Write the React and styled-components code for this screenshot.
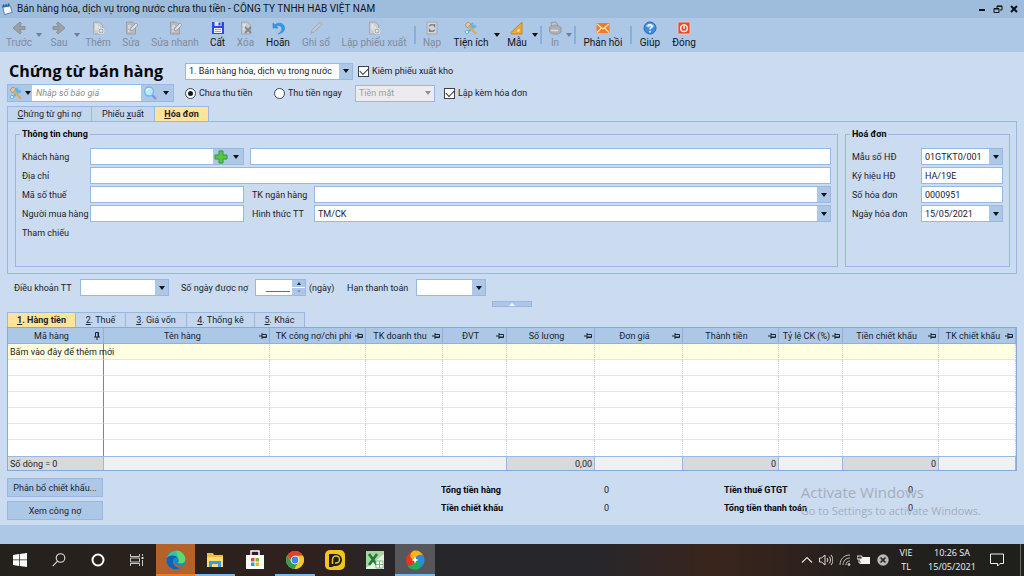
import { useState } from "react";
import styled, { createGlobalStyle } from "styled-components";

const tools = [
    { label: "Trước", icon: "back", w: 34, drop: true, off: true },
    { label: "Sau", icon: "next", w: 30, drop: true, off: true },
    { label: "Thêm", icon: "add", w: 32, off: true },
    { label: "Sửa", icon: "edit", w: 30, off: true },
    { label: "Sửa nhanh", icon: "edit", w: 54, off: true },
    { label: "Cất", icon: "save", w: 27 },
    { label: "Xóa", icon: "remove", w: 25, off: true },
    { label: "Hoãn", icon: "undo", w: 36 },
    { label: "Ghi sổ", icon: "pen", w: 36, off: true },
    { label: "Lập phiếu xuất", icon: "add", w: 76, off: true },
    { sep: true },
    { label: "Nạp", icon: "reload", w: 28, off: true },
    { label: "Tiện ích", icon: "tools", w: 46, drop: true },
    { label: "Mẫu", icon: "ruler", w: 30, drop: true },
    { sep: true },
    { label: "In", icon: "print", w: 22, drop: true, off: true },
    { sep: true },
    { label: "Phản hồi", icon: "mail", w: 50 },
    { sep: true },
    { label: "Giúp", icon: "help", w: 32 },
    { label: "Đóng", icon: "power", w: 32 }
];

const columns = [
    { name: "Mã hàng", w: 96, pinned: true },
    { name: "Tên hàng" },
    { name: "TK công nợ/chi phí", w: 96 },
    { name: "TK doanh thu", w: 77 },
    { name: "ĐVT", w: 64 },
    { name: "Số lượng", w: 88 },
    { name: "Đơn giá", w: 88 },
    { name: "Thành tiền", w: 96 },
    { name: "Tỷ lệ CK (%)", w: 64 },
    { name: "Tiền chiết khấu", w: 96 },
    { name: "TK chiết khấu", w: 77 }
];

const docTabs = [
    { pre: "", key: "C", rest: "hứng từ ghi nợ", w: 85 },
    { pre: "Phiếu ", key: "x", rest: "uất", w: 63 },
    { pre: "", key: "H", rest: "óa đơn", w: 54 }
];

const lineTabs = [
    { pre: "", key: "1", rest: ". Hàng tiền", w: 69 },
    { pre: "", key: "2", rest: ". Thuế", w: 50 },
    { pre: "", key: "3", rest: ". Giá vốn", w: 61 },
    { pre: "", key: "4", rest: ". Thống kê", w: 68 },
    { pre: "", key: "5", rest: ". Khác", w: 50 }
];

const page = "M2.5 1h6l3 3v9h-9z";

const icons = {
    back: <path d="M13 5.5H7.500L9.500 2.500 8 1 1 7l7 6 1.500-1.500-2-3H13z" fill="#9c9fa3" stroke="#83888e" strokeWidth=".8" />,
    next: <path d="M1 5.500h5.500L4.500 2.500 6 1l7 6-7 6-1.500-1.500 2-3H1z" fill="#9c9fa3" stroke="#83888e" strokeWidth=".8" />,
    add: <>
        <path d={page} fill="#c9cdd1" stroke="#a3a8ad" />
        <path d="M4 4h3M4 6h5M4 8h3" stroke="#f1f1f1" />
        <circle cx="10" cy="10" r="3" fill="#a5a9ad" stroke="#dfe3e7" />
        <path d="M8.500 10h3M10 8.500v3" stroke="#f4f4f4" />
    </>,
    edit: <>
        <path d={page} fill="#b7bbc0" stroke="#9a9fa5" />
        <path d="M4 5h3M4 7h2M4 10h3" stroke="#f1f1f1" />
        <path d="M6 10l1-3 5-5 2 2-5 5z" fill="#dde0e2" stroke="#90959a" strokeWidth=".8" />
    </>,
    save: <>
        <path d="M1 1h12v12H1z" fill="#2d49e0" />
        <path d="M3.500 1h7v4h-7z" fill="#dce6ff" />
        <path d="M7.500 1.500h2v3h-2z" fill="#2d49e0" />
        <path d="M3 7h8v5H3z" fill="#eef3ff" />
        <path d="M4 8.500h6M4 10.500h6" stroke="#8fa5ee" />
    </>,
    remove: <>
        <path d={page} fill="#c9cdd1" stroke="#a3a8ad" />
        <path d="M4 4h3M4 6h2M4 8h2" stroke="#f1f1f1" />
        <path d="M6 6l6 6M12 6l-6 6" stroke="#85898d" strokeWidth="2" />
    </>,
    undo: <path d="M2 2v5h5L5.200 5.200C8 3.500 11 5 11 8c0 2-1.500 3.500-4 5 4.500-1 6.500-3 6.500-6C13.500 2.500 8 .500 4 3.700z" fill="#3199e8" stroke="#2184d2" strokeWidth=".6" />,
    pen: <path d="M2 12.500l1-3.500 8-8 2.200 2-8 8z" fill="#c6c9cc" stroke="#9c9fa3" strokeWidth=".8" />,
    reload: <>
        <path d="M2 1h10v12H2z" fill="#d0d4d8" stroke="#a3a8ad" />
        <path d="M4.500 5.500c0-2 3.500-2.500 5-.5V3M9.500 8.500c0 2-3.500 2.500-5 .5v2" fill="none" stroke="#747a80" strokeWidth="1.300" />
    </>,
    tools: <>
        <path d="M3 12L11 4" stroke="#5cb7e6" strokeWidth="2" />
        <path d="M9.500 1.500a3 3 0 1 0 3 3l-2 .5-1.500-1.500z" fill="#5cb7e6" />
        <path d="M5 5.500l7 7" stroke="#e8a64c" strokeWidth="2.200" />
        <path d="M1 4l3-3 3 2-3.500 4z" fill="#e5c896" stroke="#9d8d75" strokeWidth=".8" />
        <circle cx="3" cy="11" r="1.700" fill="#d9eefb" stroke="#5cb7e6" />
    </>,
    ruler: <>
        <path d="M1 11.500L12 1v12H1z" fill="#e9a73c" stroke="#c8862a" />
        <path d="M6.500 10.500L9.500 7.500v3z" fill="#fff0cf" />
    </>,
    print: <>
        <path d="M3 1.500l5-.5 2 4-6 1z" fill="#c4c7ca" stroke="#96999c" />
        <path d="M1.500 6c3-3 11-2 11.500 1v4c-2 3-9 3-11.500 0z" fill="#acb0b4" stroke="#96999c" />
        <path d="M3 9.500h7" stroke="#dadcde" strokeWidth="1.500" />
    </>,
    mail: <>
        <path d="M.500 2h13v10H.500z" fill="#f47b20" />
        <path d="M1 3l6 5 6-5M1 11.500l4.500-4.500M13 11.500L8.500 7" fill="none" stroke="#ffe0c2" strokeWidth="1.200" />
    </>,
    help: <>
        <circle cx="7" cy="7" r="6" fill="#3d8be6" stroke="#2568ba" />
        <path d="M2.500 5.500c1-4 8-4 9 0-3 1.500-6 1.500-9 0z" fill="#86bbf4" />
        <path d="M5 5.500c0-2.500 4-2.500 4 0 0 1.300-2 1.500-2 3" fill="none" stroke="#fff" strokeWidth="1.500" />
        <circle cx="7" cy="10.700" r=".9" fill="#fff" />
    </>,
    power: <>
        <rect x="1" y="1" width="12" height="12" rx="1" fill="#e2492d" stroke="#f6c0b4" />
        <circle cx="7" cy="7.200" r="3.300" fill="none" stroke="#fff" strokeWidth="1.300" />
        <path d="M7 4.500v3.500" stroke="#fff" strokeWidth="1.400" />
    </>,
    find: <>
        <path d="M9 9l4 4" stroke="#7f95d6" strokeWidth="2.400" />
        <circle cx="6" cy="5.500" r="4.500" fill="#bfe5fa" stroke="#6fb9e6" strokeWidth="1.300" />
        <path d="M3.500 5c.500-2 2-2.500 3-2.500" fill="none" stroke="#fff" strokeWidth="1.200" />
    </>,
    plus: <path d="M5 1h4v4h4v4H9v4H5V9H1V5h4z" fill="#55c84a" stroke="#2f9a33" />,
    app: <>
        <path d="M2 4l9-1 2 8-9 2.500z" fill="#f4faff" stroke="#3b78c6" />
        <path d="M1 3l9-1.500.5 2.500L1.500 5.500z" fill="#3d7bd0" />
        <path d="M3 1.500v3M6 1v3M9 .5v3" stroke="#24477c" />
        <path d="M10 2l3 1-.5 2z" fill="#f2b632" />
    </>
};

const Icon = ({ name, size = 14 }) => (
    <svg width={size} height={size} viewBox="0 0 14 14" aria-hidden="true">{icons[name]}</svg>
);

const Caret = ({ color = "#111" }) => (
    <svg width="6" height="4" viewBox="0 0 6 4" aria-hidden="true"><path d="M0 0h6L3 4z" fill={color} /></svg>
);

const Pin = ({ down }) => (
    <svg width="8" height="8" viewBox="0 0 8 8" aria-hidden="true">
        <g transform={down ? "rotate(-90 4 4)" : undefined} fill="none" stroke="#1d2633">
            <path d="M0 4h3M3 1v6M3 2.500h4.500v3H3M3 5h4.500" />
        </g>
    </svg>
);

function Combo({ id, value, label, disabled }) {
    return (
        <ComboBox $off={disabled}>
            <select id={id} aria-label={label} disabled={disabled} defaultValue={value}>
                <option value={value}>{value}</option>
            </select>
            <ComboArrow $off={disabled}><Caret color={disabled ? "#8b8f94" : "#111"} /></ComboArrow>
        </ComboBox>
    )
}

function Tabs({ items, active, onPick, label }) {
    return (
        <TabList role="tablist" aria-label={label}>
            {items.map((tab, i) => (
                <Tab key={tab.rest} role="tab" aria-selected={i === active} $w={tab.w} $on={i === active} onClick={() => onPick(i)}>
                    {tab.pre}<u>{tab.key}</u>{tab.rest}
                </Tab>
            ))}
        </TabList>
    )
}

function Toolbar() {
    return (
        <ToolbarBox>
            {tools.map((tool, i) => tool.sep ? <Separator key={i} /> : (
                <ToolGroup key={i}>
                    <Tool $w={tool.w} disabled={tool.off}>
                        <Icon name={tool.icon} />
                        <span>{tool.label}</span>
                    </Tool>
                    {tool.drop && (
                        <ToolDrop aria-label={`Mở ${tool.label}`} disabled={tool.off}>
                            <Caret color={tool.off ? "#6f7f94" : "#111"} />
                        </ToolDrop>
                    )}
                </ToolGroup>
            ))}
        </ToolbarBox>
    )
}

function InvoicePane() {
    return (
        <Pane>
            <Group>
                <legend>Thông tin chung</legend>
                <GeneralGrid>
                    <label htmlFor="customer">Khách hàng</label>
                    <CustomerBox>
                        <input id="customer" />
                        <button aria-label="Thêm khách hàng"><Icon name="plus" /></button>
                        <button aria-label="Chọn khách hàng"><Caret /></button>
                    </CustomerBox>
                    <TextInput aria-label="Tên khách hàng" />
                    <label htmlFor="address">Địa chỉ</label>
                    <TextInput id="address" $wide />
                    <label htmlFor="taxcode">Mã số thuế</label>
                    <TextInput id="taxcode" />
                    <Pair>
                        <label htmlFor="bank">TK ngân hàng</label>
                        <Combo id="bank" value="" />
                    </Pair>
                    <label htmlFor="buyer">Người mua hàng</label>
                    <TextInput id="buyer" />
                    <Pair>
                        <label htmlFor="payment">Hình thức TT</label>
                        <Combo id="payment" value="TM/CK" />
                    </Pair>
                    <span>Tham chiếu</span>
                </GeneralGrid>
            </Group>
            <Group $narrow>
                <legend>Hoá đơn</legend>
                <InvoiceGrid>
                    <label htmlFor="form">Mẫu số HĐ</label>
                    <Combo id="form" value="01GTKT0/001" />
                    <label htmlFor="serial">Ký hiệu HĐ</label>
                    <TextInput id="serial" defaultValue="HA/19E" />
                    <label htmlFor="number">Số hóa đơn</label>
                    <TextInput id="number" defaultValue="0000951" />
                    <label htmlFor="date">Ngày hóa đơn</label>
                    <Combo id="date" value="15/05/2021" />
                </InvoiceGrid>
            </Group>
        </Pane>
    )
}

function LineTable() {
    return (
        <Table>
            <colgroup>
                {columns.map(col => <Col key={col.name} $w={col.w} />)}
            </colgroup>
            <thead>
                <tr>
                    {columns.map(col => (
                        <th key={col.name}>
                            <HeadCell><span>{col.name}</span><Pin down={col.pinned} /></HeadCell>
                        </th>
                    ))}
                </tr>
            </thead>
            <tbody>
                <NewRow>
                    <td>Bấm vào đây để thêm mới</td>
                    {columns.slice(1).map(col => <td key={col.name} />)}
                </NewRow>
                {[1, 2, 3, 4, 5, 6].map(row => (
                    <tr key={row}>
                        {columns.map(col => <td key={col.name} />)}
                    </tr>
                ))}
            </tbody>
            <tfoot>
                <tr>
                    <SumCell $left>Số dòng = 0</SumCell>
                    <td colSpan="4" />
                    <SumCell>0,00</SumCell>
                    <td />
                    <SumCell>0</SumCell>
                    <td />
                    <SumCell>0</SumCell>
                    <td />
                </tr>
            </tfoot>
        </Table>
    )
}

function Taskbar() {
    return (
        <TaskbarBox>
            <TaskButton aria-label="Start">
                <svg width="14" height="14" viewBox="0 0 14 14"><path d="M0 2l6-.9v5.500H0zM6.700 1L14 0v6.600H6.700zM0 7.300h6v5.600L0 12zM6.700 7.300H14V14l-7.300-1z" fill="#fff" /></svg>
            </TaskButton>
            <TaskButton aria-label="Tìm kiếm">
                <svg width="14" height="14" viewBox="0 0 14 14" fill="none" stroke="#ddd" strokeWidth="1.100"><circle cx="8.500" cy="5" r="4.300" /><path d="M5.500 8.200L.7 13.200" /></svg>
            </TaskButton>
            <TaskButton aria-label="Cortana">
                <svg width="14" height="14" viewBox="0 0 14 14" fill="none" stroke="#fff" strokeWidth="2"><circle cx="7" cy="7" r="5.500" /></svg>
            </TaskButton>
            <TaskButton aria-label="Task view">
                <svg width="14" height="14" viewBox="0 0 14 14" fill="none" stroke="#c9c9c9"><path d="M.5 1v2.500h9V1M.5 13v-2.500h9V13M.5 5h9v4h-9zM12.500 1v2M12.500 7v6" /><path d="M11.500 4h2v2h-2z" fill="#ddd" stroke="none" /></svg>
            </TaskButton>
            <TaskButton aria-label="Edge" $w={39} $bg="#b3622a" $line="#f07a22">
                <svg width="20" height="20" viewBox="0 0 20 20">
                    <circle cx="10" cy="10" r="9.500" fill="#1787d4" />
                    <path d="M1 8C2 2 8-.5 13 1.200c5 1.800 7.500 6.800 6 10.300-1.500 2.500-5 2.500-7 1.300 1-1 1.500-2.300.5-4C10 5 4 5 1 8z" fill="#35c1a8" />
                    <path d="M10 .5c6 0 9.500 5 9.300 9-.5 4-5 4.500-7.300 3.300 1.500-1.500 1-3 .3-4.300z" fill="#62d86a" />
                    <path d="M1 8c3-3.500 8-3 10.500-.3C8 7 6.500 9.500 7 12c.6 4 4 6 8 5.500C8 22-1 17 1 8z" fill="#0f62b8" />
                    <path d="M8.500 9c-1.500 3 1 6.500 5 6.500 1.700 0 3.500-.3 5-1.500-1.500 2.500-3 3.500-5 3.800C8 17 5.500 12.500 8.500 9z" fill="#b3622a" />
                </svg>
            </TaskButton>
            <TaskButton aria-label="File Explorer" $w={40} $line="#76b9ed">
                <svg width="18" height="16" viewBox="0 0 18 16"><path d="M1 1h6l1 2h9v12H1z" fill="#f0bd3c" /><path d="M1 5h16v10H1z" fill="#ffdc72" /><path d="M3 15V9h12v6h-3v-3H6v3z" fill="#3f9be0" /></svg>
            </TaskButton>
            <TaskButton aria-label="Microsoft Store" $w={40}>
                <svg width="20" height="20" viewBox="0 0 20 20"><path d="M6 6V1h8v5" fill="none" stroke="#fff" strokeWidth="1.500" /><path d="M1 5h18v14H1z" fill="#fff" /><path d="M6 8h3.500v3.500H6z" fill="#e34d28" /><path d="M10.500 8H14v3.500h-3.500z" fill="#7aba28" /><path d="M6 12.500h3.500V16H6z" fill="#2a9fe0" /><path d="M10.500 12.500H14V16h-3.500z" fill="#f3b420" /></svg>
            </TaskButton>
            <TaskButton aria-label="Chrome" $w={40} $line="#76b9ed">
                <svg width="18" height="18" viewBox="0 0 18 18"><circle cx="9" cy="9" r="9" fill="#f7c52c" /><path d="M1.200 4.500A9 9 0 0 1 16.800 4.500L9 5.500 6 11z" fill="#e0402f" /><path d="M1.200 4.500A9 9 0 0 0 8.500 18L12.500 11 5.500 11z" fill="#2f9e52" /><path d="M9 4.800h7.900A9 9 0 0 1 8.500 18l4-7z" fill="#f7c52c" /><circle cx="9" cy="9" r="4.300" fill="#fff" /><circle cx="9" cy="9" r="3.400" fill="#4383ee" /></svg>
            </TaskButton>
            <TaskButton aria-label="Zoom player" $w={40}>
                <svg width="20" height="20" viewBox="0 0 20 20"><rect width="20" height="20" rx="5" fill="#f3c51c" /><path d="M4 4h7a6 6 0 0 1 0 12H9l-2 1H4z" fill="#16202c" /><path d="M7.500 14V9.500a3.500 3.500 0 1 1 3.500 3.500H10" fill="none" stroke="#f3c51c" strokeWidth="1.500" /></svg>
            </TaskButton>
            <TaskButton aria-label="Excel" $w={40}>
                <svg width="18" height="18" viewBox="0 0 18 18"><path d="M0 0h18v18H0z" fill="#e4f1df" /><path d="M0 0h18v3L0 17z" fill="#a7d59d" /><path d="M3 3l8 11M11 3L3 14" stroke="#1f7c39" strokeWidth="2.600" /><path d="M10 10h7v7h-7zM10 13.500h7M13.500 10v7" fill="#fff" stroke="#62aa67" strokeWidth=".8" /></svg>
            </TaskButton>
            <TaskButton aria-label="MISA" $w={40} $bg="#56565b" $line="#76b9ed">
                <svg width="20" height="20" viewBox="0 0 20 20"><circle cx="10" cy="10" r="9" fill="#ea3323" /><path d="M10 10C4 9.500 4 3 9 .5a9.500 9.500 0 0 1 9.500 5.500C16 4 11 5 10 10z" fill="#fbb416" /><path d="M10 10C11 4 17 4 18.500 6a9.500 9.500 0 0 1-4 12.500C16 15 14 11 10 10z" fill="#2a8be0" /><path d="M10 10c6 1 6 5 4.500 8.500A9.500 9.500 0 0 1 2 15.500c4 .5 8-1.500 8-5.500z" fill="#1fae5a" /><path d="M10 6.500l1 2.500 2.500 1-2.500 1-1 2.500-1-2.500-2.500-1L9 9z" fill="#fff" /></svg>
            </TaskButton>
            <Tray>
                <svg width="12" height="12" viewBox="0 0 12 12" fill="none" stroke="#ddd" strokeWidth="1.200"><path d="M1 8.500l5-5 5 5" /></svg>
                <svg width="14" height="12" viewBox="0 0 14 12" fill="none" stroke="#ddd"><path d="M.5 4h2L6 1v10L2.500 8h-2zM8 4c1 1 1 3 0 4M10 2.500c2 2 2 5 0 7M12 1c2.500 3 2.500 7 0 10" /></svg>
                <svg width="12" height="12" viewBox="0 0 12 12" fill="none" stroke="#bbb"><path d="M1 11C1 5 5 1 11 1M4 11c0-4 3-7 7-7M7 11c0-2.500 1.500-4 4-4" /><circle cx="10" cy="10.500" r="1" fill="#ddd" /></svg>
                <svg width="14" height="10" viewBox="0 0 14 10"><path d="M3 2h10v7H3z" fill="#f3f3f3" /><path d="M0 1h5v3H0zM2 4v4h2" fill="#333" stroke="#ddd" /></svg>
                <svg width="12" height="12" viewBox="0 0 12 12"><circle cx="6" cy="6" r="5.700" fill="#b9b9b9" /><path d="M3.500 3.500l5 5M8.500 3.500l-5 5" stroke="#222" strokeWidth="1.600" /></svg>
            </Tray>
            <TrayText $w={30}><span>VIE</span><span>TL</span></TrayText>
            <TrayText $w={58}><span>10:26 SA</span><span>15/05/2021</span></TrayText>
            <TaskButton aria-label="Thông báo" $w={32}>
                <svg width="14" height="14" viewBox="0 0 14 14" fill="none" stroke="#eee"><path d="M.5 1h13v9.500H10l-2.500 2.500V10.500h-7z" /></svg>
            </TaskButton>
            <DesktopEdge />
        </TaskbarBox>
    )
}

export default function App() {

    const [docTab, setDocTab] = useState(2);
    const [lineTab, setLineTab] = useState(0);

    return (
        <Page>
            <GlobalStyle />
            <TitleBar>
                <Icon name="app" size={12} />
                <span>Bán hàng hóa, dịch vụ trong nước chưa thu tiền - CÔNG TY TNHH HAB VIỆT NAM</span>
                <WindowButton aria-label="Thu nhỏ"><svg width="8" height="8" viewBox="0 0 8 8"><path d="M1 5h6" stroke="#111" strokeWidth="2" /></svg></WindowButton>
                <WindowButton aria-label="Khôi phục"><svg width="10" height="8" viewBox="0 0 10 8" fill="none" stroke="#111"><path d="M4 3V1h5v4H7M1 3.500h5v4H1zM1 4h5M4 1.300h5" /></svg></WindowButton>
                <WindowButton aria-label="Đóng cửa sổ"><svg width="8" height="8" viewBox="0 0 8 8"><path d="M1 1l6 6M7 1L1 7" stroke="#111" strokeWidth="2" /></svg></WindowButton>
            </TitleBar>
            <Toolbar />
            <Main>
                <Header>
                    <h1>Chứng từ bán hàng</h1>
                    <Options>
                        <Sized $w={168}><Combo label="Loại chứng từ" value="1. Bán hàng hóa, dịch vụ trong nước" /></Sized>
                        <Choice><input type="checkbox" defaultChecked />Kiêm phiếu xuất kho</Choice>
                    </Options>
                    <SearchBox>
                        <button aria-label="Công cụ"><Icon name="tools" /><Caret /></button>
                        <input aria-label="Nhập số báo giá" placeholder="Nhập số báo giá" />
                        <button aria-label="Tìm"><Icon name="find" /><Caret /></button>
                    </SearchBox>
                    <Options>
                        <Choice $w={84}><input type="radio" name="paid" defaultChecked />Chưa thu tiền</Choice>
                        <Choice $w={76}><input type="radio" name="paid" />Thu tiền ngay</Choice>
                        <Sized $w={80}><Combo label="Phương thức" value="Tiền mặt" disabled /></Sized>
                        <Choice $gap><input type="checkbox" defaultChecked />Lập kèm hóa đơn</Choice>
                    </Options>
                </Header>
                <Tabs items={docTabs} active={docTab} onPick={setDocTab} label="Chứng từ" />
                <InvoicePane />
                <Terms>
                    <Term>
                        <TermLabel htmlFor="terms" $w={60}>Điều khoản TT</TermLabel>
                        <Sized $w={89}><Combo id="terms" value="" /></Sized>
                    </Term>
                    <Term>
                        <TermLabel htmlFor="days" $w={68}>Số ngày được nợ</TermLabel>
                        <SpinBox>
                            <input id="days" defaultValue="______" />
                            <Spinner>
                                <button aria-label="Tăng"><svg width="4" height="3" viewBox="0 0 4 3"><path d="M0 3h4L2 0z" fill="#222c66" /></svg></button>
                                <button aria-label="Giảm"><svg width="4" height="3" viewBox="0 0 4 3"><path d="M0 0h4L2 3z" fill="#b08fae" /></svg></button>
                            </Spinner>
                        </SpinBox>
                        <Unit>(ngày)</Unit>
                    </Term>
                    <Term>
                        <TermLabel htmlFor="due" $w={63}>Hạn thanh toán</TermLabel>
                        <Sized $w={70}><Combo id="due" value="" /></Sized>
                    </Term>
                </Terms>
                <Collapse aria-label="Thu gọn"><svg width="6" height="3" viewBox="0 0 6 3"><path d="M0 3h6L3 0z" fill="#fff" /></svg></Collapse>
                <Tabs items={lineTabs} active={lineTab} onPick={setLineTab} label="Chi tiết" />
                <LineTable />
                <Bottom>
                    <Actions>
                        <ActionButton>Phân bổ chiết khấu...</ActionButton>
                        <ActionButton>Xem công nợ</ActionButton>
                    </Actions>
                    <Totals $w={168} $after={115}>
                        <dt>Tổng tiền hàng</dt><dd>0</dd>
                        <dt>Tiền chiết khấu</dt><dd>0</dd>
                    </Totals>
                    <Totals $w={189} $after={104}>
                        <dt>Tiền thuế GTGT</dt><dd>0</dd>
                        <dt>Tổng tiền thanh toán</dt><dd>0</dd>
                    </Totals>
                    <Watermark>
                        <strong>Activate Windows</strong>
                        <span>Go to Settings to activate Windows.</span>
                    </Watermark>
                </Bottom>
            </Main>
            <StatusBar />
            <Taskbar />
        </Page>
    )
}

const GlobalStyle = createGlobalStyle`
    * {
        box-sizing: border-box;
    }

    body {
        margin: 0;
        background: #cbdbf0;
    }

    body, button, input, select {
        font-family: Roboto, "Liberation Sans", sans-serif;
        font-size: 9px;
        line-height: 12px;
        color: #1c222b;
    }

    button {
        padding: 0;
        border: 0;
        background: none;
    }

    input, select {
        min-width: 0;
        margin: 0;
        border: 0;
        border-radius: 0;
        outline: none;
    }

    svg {
        display: block;
        flex-shrink: 0;
    }
`
const Page = styled.div`
    display: flex;
    flex-direction: column;
    min-height: 100vh;
`
const TitleBar = styled.header`
    display: flex;
    align-items: center;
    gap: 4px;
    height: 18px;
    padding: 0 4px 0 1px;
    background: #9ebcdb;
    font-size: 10px;
    color: #10151c;

    span {
        flex: 1;
    }
`
const WindowButton = styled.button`
    display: flex;
    align-items: center;
    justify-content: center;
    width: 12px;
    height: 14px;
`
const ToolbarBox = styled.div`
    display: flex;
    gap: 2px;
    height: 34px;
    padding-left: 2px;
    background: #adc7e7;
`
const ToolGroup = styled.div`
    display: flex;
`
const Tool = styled.button`
    display: flex;
    flex-direction: column;
    align-items: center;
    gap: 2px;
    width: ${props => props.$w}px;
    padding-top: 3px;
    font-size: 10px;
    white-space: nowrap;
    color: #10151c;

    &:disabled {
        color: #808b9a;
    }
`
const ToolDrop = styled.button`
    display: flex;
    align-items: center;
    justify-content: center;
    width: 6px;
`
const Separator = styled.div`
    width: 2px;
    margin: 8px 0;
    background: #86aede;
`
const Main = styled.main`
    flex: 1;
    padding: 10px 7px 4px;
    background: #cbdbf0;
`
const Header = styled.section`
    display: grid;
    grid-template-columns: 167px 1fr;
    grid-template-rows: 18px 18px;
    gap: 4px 11px;
    align-items: center;
    margin-bottom: 4px;

    h1 {
        margin: 0;
        padding-left: 2px;
        font-family: "Open Sans", "Noto Sans", sans-serif;
        font-size: 16px;
        line-height: 18px;
        white-space: nowrap;
        color: #05080c;
    }
`
const Options = styled.div`
    display: flex;
    align-items: center;
    gap: 5px;
`
const Sized = styled.div`
    width: ${props => props.$w}px;
`
const ComboBox = styled.div`
    display: grid;
    flex: 1;
    height: 17px;
    border: 1px solid #97b8e2;
    background: ${props => props.$off ? "#ececee" : "#fff"};

    select {
        grid-area: 1 / 1;
        width: 100%;
        padding: 0 14px 0 3px;
        appearance: none;
        background: none;
    }

    select:disabled {
        color: #9b9ea3;
        opacity: 1;
    }
`
const ComboArrow = styled.span`
    display: flex;
    grid-area: 1 / 1;
    align-items: center;
    justify-content: center;
    justify-self: end;
    width: 13px;
    background: ${props => props.$off ? "none" : "#adc7e7"};
    pointer-events: none;
`
const Choice = styled.label`
    display: flex;
    align-items: center;
    gap: 3px;
    width: ${props => props.$w ? props.$w + "px" : "auto"};
    margin-left: ${props => props.$gap ? "4px" : "0"};
    white-space: nowrap;

    input {
        display: flex;
        align-items: center;
        justify-content: center;
        flex-shrink: 0;
        width: 11px;
        height: 11px;
        border: 1px solid #3d444e;
        appearance: none;
        background: #fff;
    }

    input[type="radio"] {
        border-radius: 50%;
    }

    input[type="radio"]:checked::after {
        content: "";
        width: 5px;
        height: 5px;
        border-radius: 50%;
        background: #161a20;
    }

    input[type="checkbox"]:checked::after {
        content: "";
        width: 7px;
        height: 4px;
        margin-bottom: 2px;
        border: solid #30363e;
        border-width: 0 0 1px 1px;
        transform: rotate(-45deg);
    }
`
const SearchBox = styled.div`
    display: flex;
    height: 18px;
    border: 1px solid #97b8e2;
    background: #adc7e7;

    input {
        flex: 1;
        padding: 0 4px;
    }

    input::placeholder {
        font-style: italic;
        color: #8a8d92;
    }

    button {
        display: flex;
        align-items: center;
        gap: 2px;
        padding: 0 1px;
    }

    button:last-child {
        gap: 6px;
        padding: 0 4px 0 2px;
    }
`
const TabList = styled.div`
    display: flex;
    height: 15px;
`
const Tab = styled.button`
    width: ${props => props.$w}px;
    border: 1px solid #97b8e2;
    border-width: 1px 1px 0 0;
    background: ${props => props.$on ? "#ffe398" : "#c3d6ee"};
    font-weight: ${props => props.$on ? 700 : 400};
    white-space: nowrap;

    &:first-child {
        border-left-width: 1px;
    }
`
const Pane = styled.section`
    display: flex;
    gap: 7px;
    padding: 6px 6px 6px 7px;
    border: 1px solid #97b8e2;
`
const Group = styled.fieldset`
    flex: ${props => props.$narrow ? "0 0 165px" : "1"};
    min-width: 0;
    margin: 0;
    padding: 8px 6px 25px;
    border: 1px solid #97b8e2;

    legend {
        padding: 0 2px;
        margin-left: -2px;
        font-weight: 700;
        color: #05080c;
    }
`
const GeneralGrid = styled.div`
    display: grid;
    grid-template-columns: 62px 154px 1fr;
    grid-auto-rows: 17px;
    gap: 2px 6px;
    align-items: center;
    white-space: nowrap;
`
const InvoiceGrid = styled.div`
    display: grid;
    grid-template-columns: 63px 1fr;
    grid-auto-rows: 17px;
    gap: 2px 6px;
    align-items: center;
    white-space: nowrap;
`
const TextInput = styled.input`
    grid-column: ${props => props.$wide ? "span 2" : "auto"};
    width: 100%;
    height: 17px;
    padding: 0 3px;
    border: 1px solid #97b8e2;
    background: #fff;
`
const CustomerBox = styled.div`
    display: flex;
    height: 17px;
    border: 1px solid #97b8e2;
    background: #adc7e7;

    input {
        flex: 1;
    }

    button {
        display: flex;
        align-items: center;
        justify-content: center;
        width: 15px;
    }
`
const Pair = styled.div`
    display: flex;
    align-items: center;

    label {
        width: 64px;
        padding-left: 2px;
    }
`
const Terms = styled.section`
    display: flex;
    gap: 12px;
    padding: 5px 7px;
`
const Term = styled.div`
    display: flex;
    align-items: center;
    white-space: nowrap;
`
const TermLabel = styled.label`
    width: ${props => props.$w}px;
    margin-right: 6px;
`
const SpinBox = styled.div`
    display: flex;
    width: 51px;
    height: 17px;
    border: 1px solid #97b8e2;
    background: #fff;

    input {
        flex: 1;
        padding: 0 2px;
        text-align: right;
        color: #26306e;
    }
`
const Spinner = styled.div`
    display: flex;
    flex-direction: column;
    width: 13px;
    gap: 1px;

    button {
        display: flex;
        flex: 1;
        align-items: center;
        justify-content: center;
        background: #adc7e7;
    }
`
const Unit = styled.span`
    width: 26px;
    margin-left: 3px;
`
const Collapse = styled.button`
    display: flex;
    align-items: center;
    justify-content: center;
    width: 40px;
    height: 6px;
    margin: 0 auto 5px;
    border: 1px solid #97b8e2;
    background: #adc7e7;
`
const Table = styled.table`
    width: 100%;
    table-layout: fixed;
    border-collapse: separate;
    border-spacing: 0;
    border: 1px solid #85abd9;
    background: #fff;

    th, td {
        height: 16px;
        padding: 0 2px;
        font-weight: 400;
        white-space: nowrap;
        border-right: 1px dotted #cfcfcf;
        border-bottom: 1px solid #e4e4e4;
    }

    th {
        border-right: 1px solid #8db0de;
        border-bottom: 1px solid #8db0de;
        background: #adc7e7;
    }

    tbody td:first-child {
        border-right: 1px solid #858585;
    }

    tbody tr:last-child td {
        border-bottom: 0;
    }

    tfoot td {
        height: 14px;
        border-top: 1px solid #97b8e2;
        border-right: 1px solid #97b8e2;
        border-bottom: 0;
        background: #f0f0f0;
    }
`
const Col = styled.col`
    width: ${props => props.$w ? props.$w + "px" : "auto"};
`
const HeadCell = styled.div`
    display: flex;
    align-items: center;

    span {
        flex: 1;
        text-align: center;
    }
`
const NewRow = styled.tr`
    background: #ffffe1;
`
const SumCell = styled.td`
    && {
        background: #d9d9d9;
        text-align: ${props => props.$left ? "left" : "right"};
    }
`
const Bottom = styled.section`
    position: relative;
    display: flex;
    padding-top: 7px;
`
const Actions = styled.div`
    display: flex;
    flex-direction: column;
    gap: 4px;
    width: 96px;
    margin-right: auto;
`
const ActionButton = styled.button`
    height: 19px;
    border: 1px solid #97b8e2;
    background: #adc7e7;
`
const Totals = styled.dl`
    display: grid;
    grid-template-columns: 1fr auto;
    grid-auto-rows: 18px;
    align-items: center;
    width: ${props => props.$w}px;
    margin: 3px ${props => props.$after}px 0 0;

    dt {
        font-weight: 700;
        white-space: nowrap;
        color: #05080c;
    }

    dd {
        margin: 0;
    }
`
const Watermark = styled.div`
    position: absolute;
    top: 12px;
    right: 36px;
    display: flex;
    flex-direction: column;
    gap: 2px;
    font-family: "Open Sans", "Noto Sans", sans-serif;
    font-size: 11px;
    line-height: 16px;
    color: #a3aebe;
    pointer-events: none;

    strong {
        font-size: 15px;
        line-height: 18px;
        font-weight: 400;
    }
`
const StatusBar = styled.footer`
    height: 19px;
    background: #adc7e7;
`
const TaskbarBox = styled.nav`
    display: flex;
    height: 32px;
    background: linear-gradient(90deg, #24211c, #30211d 30%, #27262b 40%, #27262b 58%, #3a251c 70%, #231f1d 85%, #1f201b);
`
const TaskButton = styled.button`
    display: flex;
    align-items: center;
    justify-content: center;
    width: ${props => props.$w || 39}px;
    background: ${props => props.$bg || "none"};
    border-top: 2px solid transparent;
    border-bottom: 2px solid ${props => props.$line || "transparent"};
`
const Tray = styled.div`
    display: flex;
    align-items: center;
    gap: 6px;
    margin-left: auto;
`
const TrayText = styled.div`
    display: flex;
    flex-direction: column;
    align-items: center;
    justify-content: center;
    gap: 2px;
    width: ${props => props.$w}px;
    margin-left: 2px;
    font-family: "Open Sans", "Noto Sans", sans-serif;
    font-size: 9px;
    color: #f2f2f2;
`
const DesktopEdge = styled.div`
    width: 4px;
    margin-left: 7px;
    border-left: 1px solid #6b6b6b;
`
